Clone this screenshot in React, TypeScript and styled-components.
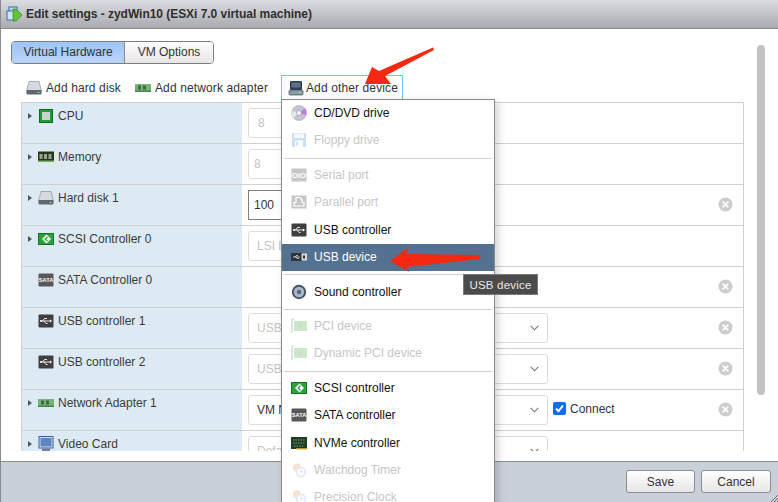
import React from "react";
import styled, { createGlobalStyle } from "styled-components";

const Global = createGlobalStyle`
  html, body { margin: 0; padding: 0; background: #fff; overflow: hidden; }
  * { box-sizing: border-box; }
  body { font-family: "Liberation Sans", Arial, sans-serif; font-size: 12px; color: #333; }
`;

const Window = styled.div`
  position: relative; width: 778px; height: 502px; display: flex; flex-direction: column;
  overflow: hidden; border-left: 1px solid #8a8a8a; background: #fff;
`;
const TitleBar = styled.div`
  height: 29px; flex: none; display: flex; align-items: center; gap: 4px; padding: 0 0 1px 6px; margin-left: -1px;
  background: linear-gradient(#dcdde3, #a9aaae); border-bottom: 1px solid #8b8b8f;
  font-weight: bold; color: #2f2f2f; font-size: 12px; letter-spacing: -.04px;
`;
const Body = styled.div`
  flex: 1; min-height: 0; display: flex; padding: 12px 0 10px 10px;
`;
const Main = styled.div`
  width: 733px; flex: none; display: flex; flex-direction: column; min-height: 0;
`;
const Rail = styled.div`
  width: 8px; height: 350px; margin: 4px 0 0 13px; background: #c3c3c3; border-radius: 4px; flex: none;
`;
const Tabs = styled.div`
  display: flex; width: 203px; height: 23px; border: 1px solid #7d7d7d; border-radius: 4px; overflow: hidden; flex: none;
`;
const Tab = styled.div<{ $active?: boolean }>`
  display: flex; align-items: center; justify-content: center; height: 100%; padding-bottom: 1px;
  width: ${(p) => (p.$active ? "113px" : "auto")}; flex: ${(p) => (p.$active ? "none" : 1)};
  color: #333; font-size: 12px;
  background: ${(p) => (p.$active ? "linear-gradient(#9fc4f8, #b9d4f8)" : "linear-gradient(#fdfdfd, #e6e6e6)")};
  border-right: ${(p) => (p.$active ? "1px solid #8a8a8a" : "none")};
`;
const Toolbar = styled.div`
  display: flex; align-items: center; height: 25px; margin-top: 11px; padding-left: 15px; flex: none; color: #333;
  letter-spacing: .12px;
`;
const ToolItem = styled.div<{ $w: number }>`
  display: flex; align-items: center; gap: 4px; width: ${(p) => p.$w}px;
`;
const OtherWrap = styled.div`
  position: relative; display: flex; align-items: center; gap: 2px; width: 122px; height: 25px; padding-left: 6px;
  border: 1px solid #62c6ee; border-bottom: none;
`;
const TableClip = styled.div`
  flex: 1; min-height: 0; overflow: hidden; margin: 2px 0 0 10px;
  border-left: 1px solid #d0d0d0; border-right: 1px solid #d0d0d0;
`;
const Row = styled.div`
  display: flex; height: 41px; border-top: 1px solid #d0d0d0; flex: none;
`;
const Label = styled.div`
  width: 220px; flex: none; background: #deeaf3; display: flex; align-items: center; height: 100%;
  padding: 0 0 15px 6px; color: #3a3a3a;
`;
const Caret = styled.span<{ $hidden?: boolean }>`
  width: 0; height: 0; border-left: 4px solid #555; border-top: 3.5px solid transparent; border-bottom: 3.5px solid transparent;
  visibility: ${(p) => (p.$hidden ? "hidden" : "visible")}; margin-right: 6px; flex: none;
`;
const IconSlot = styled.span`
  width: 16px; height: 16px; flex: none; margin-right: 4px; display: flex; align-items: center; justify-content: center;
`;
const Value = styled.div`
  flex: 1; display: flex; align-items: center; height: 30px; margin-top: 5px; padding: 0 10px 0 6px;
`;
const Field = styled.div<{ $strong?: boolean; $w: number; $dim?: boolean; $pad?: number }>`
  width: ${(p) => p.$w}px; height: 30px; display: flex; align-items: center; justify-content: space-between; flex: none;
  padding: 0 8px 0 ${(p) => p.$pad ?? 8}px; font-size: 12px; background: #fff;
  border: 1px solid ${(p) => (p.$strong ? "#7d7d7d" : "#dcdcdc")};
  border-radius: ${(p) => (p.$strong ? "0" : "3px")};
  color: ${(p) => (p.$dim ? "#c4c4c4" : "#333")};
`;
const Chevron = styled.svg`
  width: 9px; height: 6px; flex: none;
`;
const ConnectBox = styled.label`
  display: flex; align-items: center; gap: 4px; margin: 0 0 3px 5px; color: #333;
`;
const Check = styled.span`
  width: 13px; height: 13px; border-radius: 2px; background: #0f6cf2; display: flex; align-items: center; justify-content: center;
`;
const Remove = styled.svg`
  width: 15px; height: 15px; margin: 0 0 2px auto; flex: none;
`;
const Footer = styled.div`
  position: relative; height: 41px; flex: none; background: #c9d0da; border-top: 1px solid #8b8b8f;
  display: flex; justify-content: flex-end; gap: 6px; padding: 8px 7px 0 0;
`;
const Button = styled.div<{ $w: number }>`
  width: ${(p) => p.$w}px; height: 23px; border: 1px solid #8e8e8e; border-radius: 3px; background: linear-gradient(#fff, #e6e6e6);
  display: flex; align-items: center; justify-content: center; color: #333; font-size: 12px;
`;
const Grip = styled.svg`
  position: absolute; right: 0; bottom: 0; width: 7px; height: 7px;
`;
const Menu = styled.div`
  position: absolute; left: -1px; top: 23px; width: 214px; height: 440px; background: #fff; border: 1px solid #8a8a8a;
  box-shadow: 3px 3px 8px rgba(0,0,0,.18); z-index: 5; color: #111; letter-spacing: 0;
`;
const Item = styled.div<{ $off?: boolean; $hover?: boolean }>`
  height: 27.3px; display: flex; align-items: center; gap: 7px; padding: 0 0 1px 9px;
  color: ${(p) => (p.$hover ? "#fff" : p.$off ? "#c6c6c6" : "#111")};
  background: ${(p) => (p.$hover ? "#557191" : "transparent")};
`;
const Sep = styled.div`
  height: 1px; margin: 3.3px 2px 3px; background: #d2d2d2;
`;
const Tip = styled.div`
  position: absolute; left: 462px; top: 274px; width: 75px; height: 21px; background: #4b4b4b; border: 1px solid #7a7a7a;
  color: #e8e8e8; font-size: 11.5px; letter-spacing: .2px; display: flex; align-items: center; justify-content: center; z-index: 7;
`;
const Arrows = styled.svg`
  position: absolute; left: -1px; top: 0; width: 778px; height: 502px; pointer-events: none; z-index: 6;
`;
const Svg = styled.svg<{ $off?: boolean }>`
  width: 16px; height: 16px; flex: none; opacity: ${(p) => (p.$off ? 0.32 : 1)}; display: block;
`;

type IP = { off?: boolean };
const I = ({ off, children }: IP & { children: React.ReactNode }) => (
  <Svg $off={off} viewBox="0 0 16 16">{children}</Svg>
);

const TitleIcon = () => (
  <I>
    <rect x="3" y="1" width="8" height="6" fill="#bcd6f4" stroke="#2d6fb5" />
    <rect x="1" y="5" width="8" height="9" fill="#d4e6f9" stroke="#2d6fb5" />
    <path d="M7 3h3l6 6-6 6H7z" fill="#5fc23c" stroke="#2c8a1e" strokeWidth=".7" />
  </I>
);
const HardDisk = () => (
  <I>
    <path d="M3 1.500h10l2.500 9.500H.5z" fill="#d6dade" stroke="#8b9097" strokeWidth=".7" />
    <rect x=".5" y="10" width="15" height="4.500" rx="1" fill="#5d6672" />
    <rect x="11.500" y="12" width="2" height="1" fill="#8fe07a" />
  </I>
);
const Nic = ({ off }: IP) => (
  <I off={off}>
    <rect x="0" y="4" width="16" height="8" fill="#78b376" />
    <rect x="3" y="5.500" width="3" height="4" fill="#46664a" />
    <rect x="8" y="5.500" width="3" height="4" fill="#46664a" />
    <rect x="0" y="10.500" width="16" height="1.500" fill="#3d8a45" />
  </I>
);
const PciIcon = ({ off }: IP) => (
  <I off={off}>
    <path d="M1 1v14" stroke="#5a78a8" strokeWidth="1.200" />
    <path d="M1 1h2" stroke="#5a78a8" strokeWidth="1" />
    <rect x="3" y="3" width="13" height="10" fill="#5cbf55" />
    <rect x="6" y="6" width="5" height="4" fill="#7a8a7a" />
  </I>
);
const Other = () => (
  <I>
    <rect x="2" y="1" width="12" height="9" rx="1" fill="#2f3d50" />
    <rect x="3.500" y="2.500" width="9" height="5" fill="#5e7287" />
    <rect x="1" y="10" width="14" height="5" rx="1" fill="#8b98a6" stroke="#46505c" strokeWidth=".7" />
    <rect x="11" y="12" width="2" height="1" fill="#7fe86e" />
  </I>
);
const Cpu = () => (
  <I>
    <rect x="1.500" y="1.500" width="13" height="13" fill="#1f9a36" stroke="#0f6b22" />
    <rect x="4" y="4" width="8" height="8" fill="#cfcfcb" />
  </I>
);
const Memory = () => (
  <I>
    <rect x="0" y="3" width="16" height="9" fill="#26351f" />
    <rect x="1.500" y="5" width="3" height="5" fill="#99a58e" />
    <rect x="6" y="5" width="3" height="5" fill="#99a58e" />
    <rect x="10.500" y="5" width="3" height="5" fill="#99a58e" />
    <rect x="0" y="11.500" width="16" height="1.500" fill="#7cb344" />
    <rect x="0" y="2" width="16" height="1" fill="#68a83e" />
  </I>
);
const Scsi = () => (
  <I>
    <rect x="0.500" y="2.500" width="15" height="11" fill="#2aa43a" stroke="#14731f" />
    <path d="M8.500 3.500 4 8l4.500 4.500L13 8z" fill="#fff" />
    <path d="M9.500 5.800 7.300 8l2.200 2.200" fill="none" stroke="#2aa43a" strokeWidth="1.300" />
  </I>
);
const Sata = () => (
  <I>
    <rect x="0.500" y="1.500" width="15" height="13" rx="1" fill="#585858" />
    <text x="8" y="10.200" textAnchor="middle" fontSize="5.700" fontWeight="bold" fill="#fff" fontFamily="Liberation Sans">SATA</text>
  </I>
);
const Usb = () => (
  <I>
    <rect x="0.500" y="1.500" width="15" height="13" rx="1" fill="#3f3f3f" />
    <path d="M2.500 8H13M4.500 8l2-2.500H9M6 8l2 2.500h1.500" fill="none" stroke="#fff" strokeWidth=".9" />
    <path d="M12 6.400 14 8l-2 1.600z" fill="#fff" />
    <circle cx="3" cy="8" r="1" fill="#fff" />
  </I>
);
const UsbDev = () => (
  <I>
    <rect x="0" y="4" width="11" height="8" fill="#2f3338" />
    <rect x="10.500" y="4.500" width="5.500" height="7" fill="#d7d7d7" />
    <rect x="12" y="6.500" width="2" height="3" fill="#333" />
    <path d="M2 8h7M4 8l1.500-1.600H7M5 8l1.200 1.500H8" fill="none" stroke="#fff" strokeWidth=".7" />
  </I>
);
const Monitor = () => (
  <I>
    <rect x="1" y="0.500" width="14" height="11.500" fill="#cfdcf0" stroke="#3e5f92" />
    <rect x="2.500" y="2" width="11" height="8.500" fill="#5c86c0" />
    <rect x="4" y="12.500" width="8" height="2.500" fill="#6b7f9e" />
  </I>
);
const Cd = () => (
  <I>
    <circle cx="8" cy="8" r="7.500" fill="#c3c4d6" stroke="#a0a0b0" strokeWidth=".5" />
    <path d="M8 8 14 3a7.500 7.500 0 0 1 1 7z" fill="#c77ad8" />
    <path d="M8 8 2 13a7.500 7.500 0 0 1-1-7z" fill="#e6e8ee" />
    <circle cx="8" cy="8" r="2.400" fill="#fff" stroke="#8f8fa0" strokeWidth=".7" />
  </I>
);
const Floppy = ({ off }: IP) => (
  <I off={off}>
    <rect x="1" y="1" width="14" height="14" fill="#5c9ae6" />
    <rect x="3" y="1.500" width="10" height="4.500" fill="#e8f1fb" />
    <rect x="4" y="8.500" width="8" height="6.500" fill="#f4f8fd" />
    <rect x="5" y="10" width="2.500" height="3" fill="#5c9ae6" />
  </I>
);
const Serial = ({ off }: IP) => (
  <I off={off}>
    <rect x="0.500" y="1.500" width="15" height="13" fill="#555" />
    <text x="8" y="10.800" textAnchor="middle" fontSize="7.600" fontWeight="bold" fill="#fff" fontFamily="Liberation Sans">OIO</text>
  </I>
);
const Parallel = ({ off }: IP) => (
  <I off={off}>
    <rect x="0.500" y="1.500" width="15" height="13" fill="#555" />
    <path d="M5 3.500h4l2 2v3h2v3.500H3V8.500h2z" fill="none" stroke="#fff" strokeWidth="1.200" />
  </I>
);
const Sound = () => (
  <I>
    <circle cx="8" cy="8" r="7.200" fill="#4a5563" />
    <circle cx="8" cy="8" r="5.200" fill="#a9b8c6" />
    <circle cx="8" cy="8" r="2.200" fill="#566675" />
  </I>
);
const Nvme = () => (
  <I>
    <rect x="0" y="2" width="16" height="12" fill="#1f3d26" />
    <path d="M2 5h12M2 8h12M3 11h9" stroke="#7ba07a" strokeWidth="1" strokeDasharray="1.500 1" />
    <rect x="5" y="13.200" width="11" height="1.300" fill="#e0b030" />
  </I>
);
const Clock = ({ off }: IP) => (
  <I off={off}>
    <circle cx="6" cy="5.500" r="4" fill="#f2a45c" />
    <circle cx="10" cy="10" r="5.500" fill="#a9c7ef" />
    <circle cx="10" cy="10" r="3.500" fill="#fff" />
    <path d="M10 7.500V10h2" fill="none" stroke="#5c86c0" strokeWidth="1" />
  </I>
);

const Down = () => (
  <Chevron viewBox="0 0 9 6">
    <path d="M.7.8 4.500 4.800 8.300.8" fill="none" stroke="#777" strokeWidth="1.100" />
  </Chevron>
);
const X = () => (
  <Remove viewBox="0 0 15 15">
    <circle cx="7.500" cy="7.500" r="7" fill="#cdcdcd" />
    <path d="M4.700 4.700l5.600 5.600M10.300 4.700l-5.600 5.600" stroke="#fff" strokeWidth="1.700" />
  </Remove>
);

type RowData = {
  label: string;
  icon: React.ReactNode;
  caret?: boolean;
  field?: { text: string; w: number; dim?: boolean; strong?: boolean; select?: boolean; pad?: number };
  connect?: boolean;
  remove?: boolean;
};

const rows: RowData[] = [
  { label: "CPU", icon: <Cpu />, caret: true, field: { text: "8", w: 200, dim: true, pad: 9 } },
  { label: "Memory", icon: <Memory />, caret: true, field: { text: "8", w: 200, dim: true, pad: 5 } },
  { label: "Hard disk 1", icon: <HardDisk />, caret: true, field: { text: "100", w: 200, strong: true, pad: 5 }, remove: true },
  { label: "SCSI Controller 0", icon: <Scsi />, caret: true, field: { text: "LSI Logic SAS", w: 240, dim: true } },
  { label: "SATA Controller 0", icon: <Sata />, remove: true },
  { label: "USB controller 1", icon: <Usb />, field: { text: "USB 2.0", w: 300, dim: true, select: true }, remove: true },
  { label: "USB controller 2", icon: <Usb />, field: { text: "USB 3.1", w: 300, dim: true, select: true }, remove: true },
  { label: "Network Adapter 1", icon: <Nic />, caret: true, field: { text: "VM Network", w: 300, select: true }, connect: true, remove: true },
  { label: "Video Card", icon: <Monitor />, caret: true, field: { text: "Default settings", w: 300, dim: true, select: true } },
];

type MenuEntry = { label?: string; icon?: React.ReactNode; off?: boolean; hover?: boolean };
const menu: MenuEntry[] = [
  { label: "CD/DVD drive", icon: <Cd /> },
  { label: "Floppy drive", icon: <Floppy off />, off: true },
  {},
  { label: "Serial port", icon: <Serial off />, off: true },
  { label: "Parallel port", icon: <Parallel off />, off: true },
  { label: "USB controller", icon: <Usb /> },
  { label: "USB device", icon: <UsbDev />, hover: true },
  {},
  { label: "Sound controller", icon: <Sound /> },
  {},
  { label: "PCI device", icon: <PciIcon off />, off: true },
  { label: "Dynamic PCI device", icon: <PciIcon off />, off: true },
  {},
  { label: "SCSI controller", icon: <Scsi /> },
  { label: "SATA controller", icon: <Sata /> },
  { label: "NVMe controller", icon: <Nvme /> },
  { label: "Watchdog Timer", icon: <Clock off />, off: true },
  { label: "Precision Clock", icon: <Clock off />, off: true },
];

export default function App() {
  return (
    <Window>
      <Global />
      <TitleBar>
        <TitleIcon />
        <span>Edit settings - zydWin10 (ESXi 7.0 virtual machine)</span>
      </TitleBar>
      <Body>
        <Main>
          <Tabs>
            <Tab $active>Virtual Hardware</Tab>
            <Tab>VM Options</Tab>
          </Tabs>
          <Toolbar>
            <ToolItem $w={109}><HardDisk />Add hard disk</ToolItem>
            <ToolItem $w={146}><Nic />Add network adapter</ToolItem>
            <OtherWrap>
              <Other />
              Add other device
              <Menu>
                {menu.map((m, i) =>
                  m.label ? (
                    <Item key={i} $off={m.off} $hover={m.hover}>{m.icon}{m.label}</Item>
                  ) : (
                    <Sep key={i} />
                  )
                )}
              </Menu>
            </OtherWrap>
          </Toolbar>
          <TableClip>
            {rows.map((r) => (
              <Row key={r.label}>
                <Label>
                  <Caret $hidden={!r.caret} />
                  <IconSlot>{r.icon}</IconSlot>
                  {r.label}
                </Label>
                <Value>
                  {r.field && (
                    <Field $w={r.field.w} $dim={r.field.dim} $strong={r.field.strong} $pad={r.field.pad}>
                      {r.field.text}
                      {r.field.select && <Down />}
                    </Field>
                  )}
                  {r.connect && (
                    <ConnectBox>
                      <Check>
                        <svg width="11" height="11" viewBox="0 0 11 11">
                          <path d="M2 5.500 4.500 8.200 9 2.500" fill="none" stroke="#fff" strokeWidth="2" />
                        </svg>
                      </Check>
                      Connect
                    </ConnectBox>
                  )}
                  {r.remove && <X />}
                </Value>
              </Row>
            ))}
          </TableClip>
        </Main>
        <Rail />
      </Body>
      <Footer>
        <Button $w={69}>Save</Button>
        <Button $w={70}>Cancel</Button>
        <Grip viewBox="0 0 7 7">
          <path d="M0 7 7 0M3 7l4-4M6 7l1-1" stroke="#555" strokeWidth=".8" />
        </Grip>
      </Footer>
      <Tip>USB device</Tip>
      <Arrows viewBox="0 0 778 502">
        <polygon points="433,47.500 379,71 372,67 365,84 391,84 385,76 434,50" fill="#f4290f" />
        <polygon points="390,261 409,247 406,254 480,255 480,259 406,267 409,272" fill="#f4290f" />
      </Arrows>
    </Window>
  );
}
